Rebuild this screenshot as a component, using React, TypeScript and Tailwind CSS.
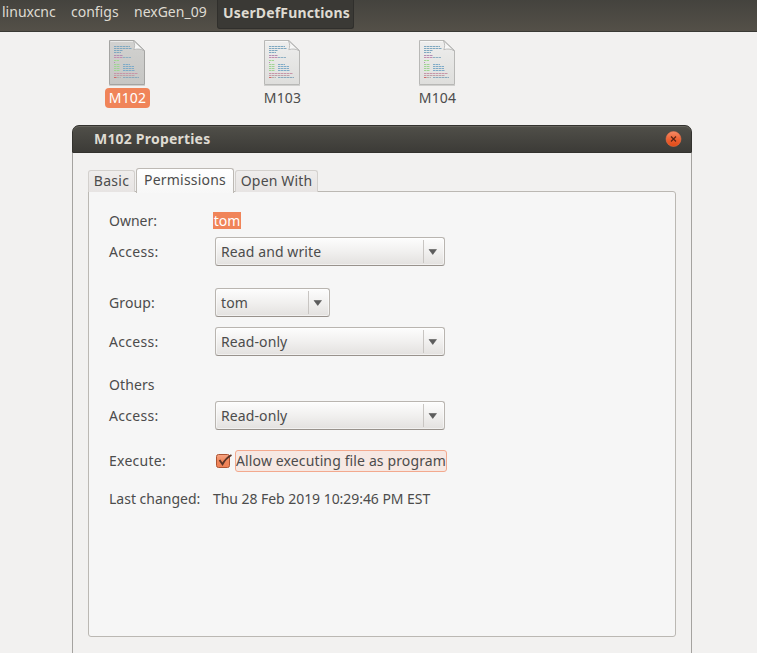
import type { ReactNode } from 'react';

const codeLines: [number, number, number, string][] = [
  [5, 6, 16, '#7fa8c0'],
  [5, 8, 18, '#7fa8c0'],
  [5, 10, 9, '#7fa8c0'],
  [5, 12, 7, '#7fa8c0'],
  [5, 15, 9, '#b28fb4'],
  [5, 17, 9, '#c58db0'],
  [14, 17, 8, '#8fb0c4'],
  [5, 20, 5, '#a0d890'],
  [5, 22, 1, '#b28fb4'],
  [5, 24, 6, '#a0d494'],
  [5, 26, 6, '#a0d494'],
  [5, 28, 6, '#a0d494'],
  [5, 30, 6, '#a0d494'],
  [14, 24, 7, '#7fabc8'],
  [14, 26, 11, '#7fabc8'],
  [14, 28, 11, '#7fabc8'],
  [14, 30, 12, '#7fabc8'],
  [5, 33, 24, '#c795a8'],
  [5, 35, 21, '#c0a0a8'],
  [5, 37, 3, '#d26868'],
  [8, 37, 4, '#b0b0b0'],
  [14, 37, 16, '#8aa9bd'],
];

function DocumentIcon({ selected, id }: { selected?: boolean; id: string }) {
  return (
    <svg width="37" height="48" viewBox="1 0 37 48" className="block">
      <defs>
        <linearGradient id={id} x1="0" y1="0" x2="0" y2="1">
          <stop offset="0" stopColor={selected ? '#d2d2d0' : '#eeeeed'} />
          <stop offset="1" stopColor={selected ? '#c6c6c4' : '#dededc'} />
        </linearGradient>
        <linearGradient id={`${id}-fold`} x1="0" y1="1" x2="1" y2="0">
          <stop offset="0" stopColor="#ffffff" />
          <stop offset=".5" stopColor="#f4f4f3" />
          <stop offset="1" stopColor="#bcbcba" />
        </linearGradient>
      </defs>
      <path d="M1.5 .5H26L36.500 10.500V44.500H1.500Z" fill={`url(#${id})`} stroke={selected ? '#a4a4a2' : '#b8b8b6'} />
      <path d="M1 45.500H37" stroke="#d0d0ce" />
      <path d="M2.500 1.500H25" stroke="#fff" strokeOpacity=".5" />
      {codeLines.map(([x, y, w, c], i) => (
        <path key={i} d={`M${x + 1} ${y + 0.5}h${w}`} stroke={c} strokeDasharray="2.5 .5" />
      ))}
      <path d="M25.500 .800C27 4 27 7 25.800 9.700C29 8.500 33 8.800 36.300 10.800Z" fill={`url(#${id}-fold)`} stroke="#b0b0ae" strokeWidth=".8" />
    </svg>
  );
}

function FileItem({ name, selected }: { name: string; selected?: boolean }) {
  return (
    <div className="flex w-[155px] flex-col items-center">
      <DocumentIcon selected={selected} id={`page-${name}`} />
      <div
        className={`flex h-5 w-[45px] items-center justify-center rounded-[4px] text-sm tracking-[0.2px] ${
          selected ? 'bg-[#f08459] text-white' : 'text-[#4c4c4c]'
        }`}
      >
        {name}
      </div>
    </div>
  );
}

function Combo({ value, narrow }: { value: string; narrow?: boolean }) {
  return (
    <div
      className={`ml-0.5 flex h-[29px] items-center rounded-[3px] border border-[#b9b5b0] border-b-[#98928c] bg-linear-to-b from-[#fdfdfd] via-[#f1f0ef] to-[#e3e1df] shadow-[inset_0_0_0_1px_#ffffff80] ${
        narrow ? 'w-[115px]' : 'w-[230px]'
      }`}
    >
      <span className="flex-1 pl-[5px] tracking-[0.1px]">{value}</span>
      <span className="h-[23px] w-px bg-[#c8c5c2]" />
      <svg width="20" height="23" viewBox="0 0 20 23" className="block">
        <path d="M5 9.500H12.500L8.750 14.500Z" fill="#5c5c5c" stroke="#4c4c4c" strokeWidth=".5" />
      </svg>
    </div>
  );
}

function Row({ label, spacing, className, children }: { label: string; spacing: string; className: string; children?: ReactNode }) {
  return (
    <div className={`flex h-[29px] items-center ${className}`}>
      <div className={`w-[104px] ${spacing}`}>{label}</div>
      {children}
    </div>
  );
}

export default function App() {
  return (
    <div className="flex h-[653px] w-[757px] flex-col overflow-hidden bg-[#f2f1f0] font-['Noto_Sans',sans-serif] text-sm whitespace-nowrap text-[#4c4c4c]">
      <nav className="flex h-8 shrink-0 items-start border-b border-[#3a3935] bg-linear-to-b from-[#44433e] to-[#545048] text-[#dfdbd2]">
        <div className="flex h-6 w-[71px] items-center pl-0.5">linuxcnc</div>
        <div className="flex h-6 w-[63px] items-center">configs</div>
        <div className="flex h-6 w-[83px] items-center">nexGen_09</div>
        <div className="flex h-[29px] w-[137px] items-center rounded-b-[3px] border border-t-0 border-[#302f2c] bg-[#3a3935] pb-[3px] pl-[5px] font-bold tracking-[0.15px]">
          UserDefFunctions
        </div>
      </nav>

      <div className="flex h-[93px] shrink-0 pt-2 pl-[50px]">
        <FileItem name="M102" selected />
        <FileItem name="M103" />
        <FileItem name="M104" />
      </div>

      <section className="ml-[72px] flex w-[620px] flex-1 flex-col">
        <header className="flex h-7 shrink-0 items-center justify-between rounded-t-[7px] border border-[#33322e] bg-linear-to-b from-[#504f49] to-[#3c3b37] pr-[9px] pl-[21px] font-bold text-[#dfdbd2] shadow-[inset_0_1px_0_#66645d]">
          <span className="tracking-[0.2px]">M102 Properties</span>
          <svg width="17" height="16" viewBox="0 0 17 16">
            <defs>
              <linearGradient id="close" x1="0" y1="0" x2="0" y2="1">
                <stop offset="0" stopColor="#f58a66" />
                <stop offset=".5" stopColor="#ee6234" />
                <stop offset="1" stopColor="#df4a16" />
              </linearGradient>
            </defs>
            <circle cx="8.500" cy="8" r="7.500" fill="url(#close)" stroke="#f0764c" strokeWidth=".5" />
            <path d="M6 5.500L11 10.500M11 5.500L6 10.500" stroke="#5a2415" strokeWidth="1.200" />
          </svg>
        </header>
        <div className="flex-1 border-x border-[#a5a3a0] px-[15px] pt-[15px]">
          <div className="flex h-6 items-end">
            <div className="mr-px flex h-[22px] w-[47px] items-center justify-center rounded-t-[3px] border border-b-0 border-[#d3d0cd] bg-linear-to-b from-[#efedec] to-[#e7e4e3] pb-0.5 tracking-[0.3px]">Basic</div>
            <div className="relative z-10 -mb-px flex h-[25px] w-[98px] items-center justify-center rounded-t-[3px] border border-b-0 border-[#bdb9b4] bg-linear-to-b from-white to-[#f7f7f7] pb-0.5 tracking-[0.2px]">Permissions</div>
            <div className="ml-px flex h-[22px] w-[83px] items-center justify-center rounded-t-[3px] border border-b-0 border-[#d3d0cd] bg-linear-to-b from-[#efedec] to-[#e7e4e3] pb-0.5 tracking-[0.15px]">Open With</div>
          </div>
          <div className="-mt-px h-[446px] w-[588px] rounded-[3px] rounded-tl-none border border-[#bbb8b3] bg-[#f6f6f6] pl-5">
            <Row label="Owner:" spacing="" className="mt-[14px]">
              <span className="flex h-[17px] w-7 items-center justify-center bg-[#f08459] text-white">tom</span>
            </Row>
            <Row label="Access:" spacing="tracking-[0.3px]" className="mt-0.5">
              <Combo value="Read and write" />
            </Row>
            <Row label="Group:" spacing="tracking-[0.1px]" className="mt-[22px]">
              <Combo value="tom" narrow />
            </Row>
            <Row label="Access:" spacing="tracking-[0.3px]" className="mt-[10px]">
              <Combo value="Read-only" />
            </Row>
            <Row label="Others" spacing="tracking-[0.1px]" className="mt-[14px]" />
            <Row label="Access:" spacing="tracking-[0.3px]" className="mt-0.5">
              <Combo value="Read-only" />
            </Row>
            <Row label="Execute:" spacing="tracking-[0.25px]" className="mt-4">
              <svg width="22" height="18" viewBox="0 0 22 18" className="shrink-0">
                <defs>
                  <linearGradient id="check" x1="0" y1="0" x2="0" y2="1">
                    <stop offset="0" stopColor="#f6a584" />
                    <stop offset=".5" stopColor="#f0875c" />
                    <stop offset="1" stopColor="#ef8054" />
                  </linearGradient>
                </defs>
                <rect x="3.500" y="2.500" width="13" height="13" rx="2" fill="url(#check)" stroke="#ad5432" />
                <path d="M6.500 8L9.500 12.200C11.500 8.500 13.500 5.800 18.500 3" fill="none" stroke="#5b3427" strokeWidth="1.900" />
              </svg>
              <span className="flex h-[22px] w-[212px] items-center rounded-[3px] border border-[#f3a98e] bg-[#f6e8e3] tracking-[0.13px]">Allow executing file as program</span>
            </Row>
            <Row label="Last changed:" spacing="" className="mt-[9px]">
              <span className="tracking-[-0.05px]">Thu 28 Feb 2019 10:29:46 PM EST</span>
            </Row>
          </div>
        </div>
      </section>
    </div>
  );
}
